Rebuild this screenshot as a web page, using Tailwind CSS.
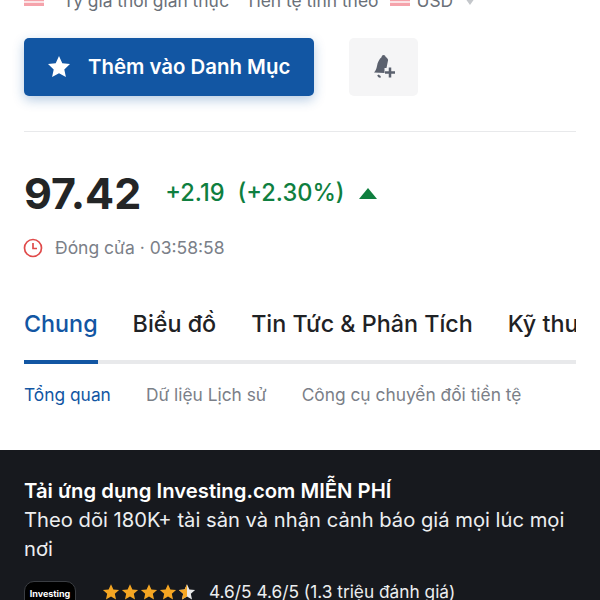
<!DOCTYPE html>
<html><head><meta charset="utf-8"><script src="https://cdn.jsdelivr.net/npm/@tailwindcss/browser@4"></script></head>
<body class="m-0 bg-white">
<div class="w-[600px] h-[600px] overflow-hidden font-[Inter,'Liberation_Sans',sans-serif]">
  <div class="h-[450px] px-6 overflow-hidden">
    <div class="flex items-center h-[24px] -mt-[11px] text-[17.4px] text-[#6a7078] whitespace-nowrap">
      <svg class="w-[20px] h-[12px] -mt-[3px]" viewBox="0 0 20 12"><rect width="20" height="12" fill="#f5a3ab"/><rect y="3" width="20" height="2" fill="#fbe3e5"/><rect y="7" width="20" height="2" fill="#fbe3e5"/></svg>
      <span class="ml-[19px]">Tỷ giá thời gian thực</span>
      <span class="ml-[16px]">Tiền tệ tính theo</span>
      <svg class="ml-[12px] w-[20px] h-[12px] -mt-[3px]" viewBox="0 0 20 12"><rect width="20" height="12" fill="#f5a3ab"/><rect y="3" width="20" height="2" fill="#fbe3e5"/><rect y="7" width="20" height="2" fill="#fbe3e5"/></svg>
      <span class="ml-[6px]">USD</span>
      <svg class="ml-[12px] w-[10px] h-[7px]" viewBox="0 0 10 7"><path d="M0 0h10L5 7z" fill="#c4c7cb"/></svg>
    </div>
    <div class="flex items-center gap-[35px] mt-[25px]">
      <button class="flex items-center w-[290px] h-[58px] rounded-[5px] bg-[#1256a3] pl-[23px] shadow-[0_4px_12px_rgba(18,86,163,0.3)] text-white text-[20.4px] font-semibold">
        <svg class="w-[24px] h-[24px]" viewBox="0 0 24 24"><path d="M12 1l3.300 7.200 7.700.9-5.700 5.300 1.600 7.700L12 18.200l-6.900 3.900 1.600-7.700L1 9.100l7.700-.9z" fill="#fff"/></svg>
        <span class="ml-[17px]">Thêm vào Danh Mục</span>
      </button>
      <div class="flex items-center justify-center w-[69px] h-[58px] rounded-[5px] bg-[#f5f5f6]">
        <svg class="w-[26px] h-[26px]" viewBox="0 0 26 26"><path d="M12.500 1c1.200 0 2 .8 2.200 1.900 1.200.6 2 1.600 2.400 3L15.500 14h-2v5l-10.500-.5c1.500-1.500 2.500-3.500 3-6.500.6-3.800 2.300-7 4.500-8.800C10.800 1.800 11.500 1 12.500 1z" fill="#5b616e"/><path d="M7 21c.6 1.200 1.400 1.800 2.600 2" stroke="#5b616e" stroke-width="2" fill="none"/><path d="M19 13.500v10M14 18.500h10" stroke="#5b616e" stroke-width="2.500"/></svg>
      </div>
    </div>
    <div class="h-px bg-[#e8e9eb] mt-[35px]"></div>
    <div class="flex items-center mt-[30px] h-[62px]">
      <span class="text-[43px] font-bold text-[#232526] leading-none">97.42</span>
      <span class="ml-[24px] text-[23.6px] font-medium text-[#0f7f3f]">+2.19</span>
      <span class="ml-[13px] text-[23.6px] font-medium text-[#0f7f3f]">(+2.30%)</span>
      <svg class="ml-[14px] w-[18px] h-[11px]" viewBox="0 0 18 11"><path d="M9 0l9 11H0z" fill="#0f7f3f"/></svg>
    </div>
    <div class="flex items-center mt-[12px] h-[24px]">
      <svg class="w-[20px] h-[20px] -ml-px" viewBox="0 0 20 20" fill="none" stroke="#e04a4a" stroke-width="1.700"><circle cx="10" cy="10" r="8.500"/><path d="M10 5v5.500h4"/></svg>
      <span class="ml-[12px] text-[17.500px] text-[#7b8088]">Đóng cửa · 03:58:58</span>
    </div>
    <div class="flex gap-[35px] mt-[48px] text-[23.300px] font-medium leading-[32px] whitespace-nowrap text-[#1f2225] overflow-hidden">
      <span class="text-[#1256a3]">Chung</span>
      <span>Biểu đồ</span>
      <span>Tin Tức &amp; Phân Tích</span>
      <span>Kỹ thuật</span>
    </div>
    <div class="h-[4px] bg-[#e8e9eb] mt-[20px]"><div class="w-[74px] h-full bg-[#1256a3]"></div></div>
    <div class="flex gap-[35px] mt-[18px] text-[17.350px] leading-[26px] text-[#7b8088]">
      <span class="text-[#1256a3]">Tổng quan</span>
      <span>Dữ liệu Lịch sử</span>
      <span>Công cụ chuyển đổi tiền tệ</span>
    </div>
  </div>
  <div class="h-[150px] bg-[#17191e] px-6 pt-[26px] text-white">
    <div class="text-[20.300px] font-semibold leading-[29px]">Tải ứng dụng Investing.com MIỄN PHÍ</div>
    <div class="text-[20.200px] leading-[29px] text-[#eceef0]">Theo dõi 180K+ tài sản và nhận cảnh báo giá mọi lúc mọi nơi</div>
    <div class="flex items-start mt-[18px]">
      <div class="flex justify-center w-[52px] h-[52px] rounded-[10px] bg-black border border-[#3a3d42] pt-[5px] text-[9px] font-bold leading-[14px]">Investing</div>
      <div class="flex ml-[26px] mt-[2px] gap-px">
        <svg class="w-[18px] h-[18px]" viewBox="0 0 24 24"><path d="M12 1.500l3.200 7 7.600.8-5.700 5.100 1.600 7.500L12 18.100l-6.700 3.800 1.600-7.500L1.200 9.300l7.600-.8z" fill="#f5a623"/></svg>
        <svg class="w-[18px] h-[18px]" viewBox="0 0 24 24"><path d="M12 1.500l3.200 7 7.600.8-5.700 5.100 1.600 7.500L12 18.100l-6.700 3.800 1.600-7.500L1.200 9.300l7.600-.8z" fill="#f5a623"/></svg>
        <svg class="w-[18px] h-[18px]" viewBox="0 0 24 24"><path d="M12 1.500l3.200 7 7.600.8-5.700 5.100 1.600 7.500L12 18.100l-6.700 3.800 1.600-7.500L1.200 9.300l7.600-.8z" fill="#f5a623"/></svg>
        <svg class="w-[18px] h-[18px]" viewBox="0 0 24 24"><path d="M12 1.500l3.200 7 7.600.8-5.700 5.100 1.600 7.500L12 18.100l-6.700 3.800 1.600-7.500L1.200 9.300l7.600-.8z" fill="#f5a623"/></svg>
        <svg class="w-[18px] h-[18px]" viewBox="0 0 24 24"><path d="M12 1.500l3.200 7 7.600.8-5.700 5.100 1.600 7.500L12 18.100l-6.700 3.800 1.600-7.500L1.200 9.300l7.600-.8z" fill="#e8e8e8"/><path d="M12 1.500v16.600l-6.700 3.800 1.600-7.500L1.200 9.300l7.600-.8z" fill="#f5a623"/></svg>
      </div>
      <span class="ml-[13px] text-[17.300px] leading-[22px] text-[#eceef0]">4.6/5 4.6/5 (1.3 triệu đánh giá)</span>
    </div>
  </div>
</div>
</body></html>
